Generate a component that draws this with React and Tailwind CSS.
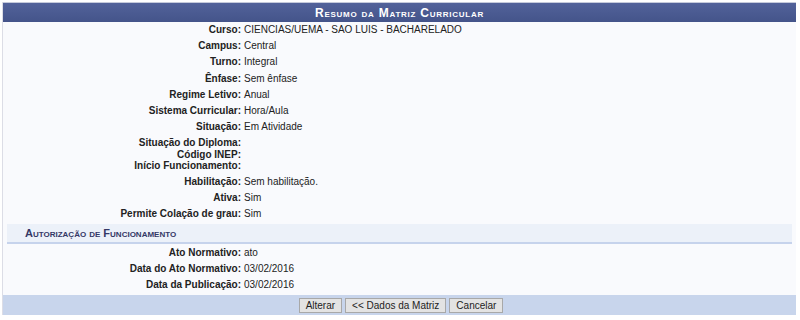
const dados = [
  { label: "Curso:", value: "CIENCIAS/UEMA - SAO LUIS - BACHARELADO" },
  { label: "Campus:", value: "Central" },
  { label: "Turno:", value: "Integral" },
  { label: "Ênfase:", value: "Sem ênfase" },
  { label: "Regime Letivo:", value: "Anual" },
  { label: "Sistema Curricular:", value: "Hora/Aula" },
  { label: "Situação:", value: "Em Atividade" },
];

const semValor = ["Situação do Diploma:", "Código INEP:", "Início Funcionamento:"];

const dadosFim = [
  { label: "Habilitação:", value: "Sem habilitação." },
  { label: "Ativa:", value: "Sim" },
  { label: "Permite Colação de grau:", value: "Sim" },
];

const autorizacao = [
  { label: "Ato Normativo:", value: "ato" },
  { label: "Data do Ato Normativo:", value: "03/02/2016" },
  { label: "Data da Publicação:", value: "03/02/2016" },
];

function Linha({ label, value, compact }) {
  return (
    <div className={`grid grid-cols-[238px_1fr] items-center ${compact ? "h-[11.5px]" : "h-[16.2px]"}`}>
      <div className="text-right font-bold text-[#222]">{label}</div>
      <div className="pl-[3px] text-[#222]">{value}</div>
    </div>
  );
}

function Botao({ children }) {
  return (
    <button className="h-[15px] border border-[#a8a8a8] bg-[#e3e3e3] px-[6px] text-[10px] leading-[13px] text-[#222]">
      {children}
    </button>
  );
}

export default function App() {
  return (
    <div className="h-[320px] w-[800px] bg-white pl-[2px] pt-[2px] font-['Liberation_Sans',Arial,sans-serif] text-[10px] leading-[12px]">
      <div className="w-[794px] border-l border-[#dcdde6] bg-[#f9fafd]">

        {/* Cabeçalho */}
        <div className="flex h-[20px] items-center justify-center border-t border-[#c5cadb] bg-gradient-to-b from-[#52629a] to-[#44548a] text-[12px] font-bold tracking-[0.75px] text-white [font-variant:small-caps]">
          Resumo da Matriz Curricular
        </div>

        {dados.map((d) => (
          <Linha key={d.label} {...d} />
        ))}
        <div className="py-[2px]">
          {semValor.map((l) => (
            <Linha key={l} label={l} value="" compact />
          ))}
        </div>
        {dadosFim.map((d) => (
          <Linha key={d.label} {...d} />
        ))}

        {/* Subcabeçalho */}
        <div className="mx-[4px] mt-[1.5px] flex h-[20px] items-center border-b-2 border-[#c6d3ec] bg-[#ecf1f9] pl-[18px] text-[11px] font-bold text-[#343866] [font-variant:small-caps]">
          Autorização de Funcionamento
        </div>

        <div className="pt-[1px]">
          {autorizacao.map((d) => (
            <Linha key={d.label} {...d} />
          ))}
        </div>

        {/* Rodapé */}
        <div className="mt-[2px] flex h-[20px] items-center justify-center gap-[3px] bg-[#c8d5ec] pl-[3px]">
          <Botao>Alterar</Botao>
          <Botao>&lt;&lt; Dados da Matriz</Botao>
          <Botao>Cancelar</Botao>
        </div>
      </div>
    </div>
  );
}
